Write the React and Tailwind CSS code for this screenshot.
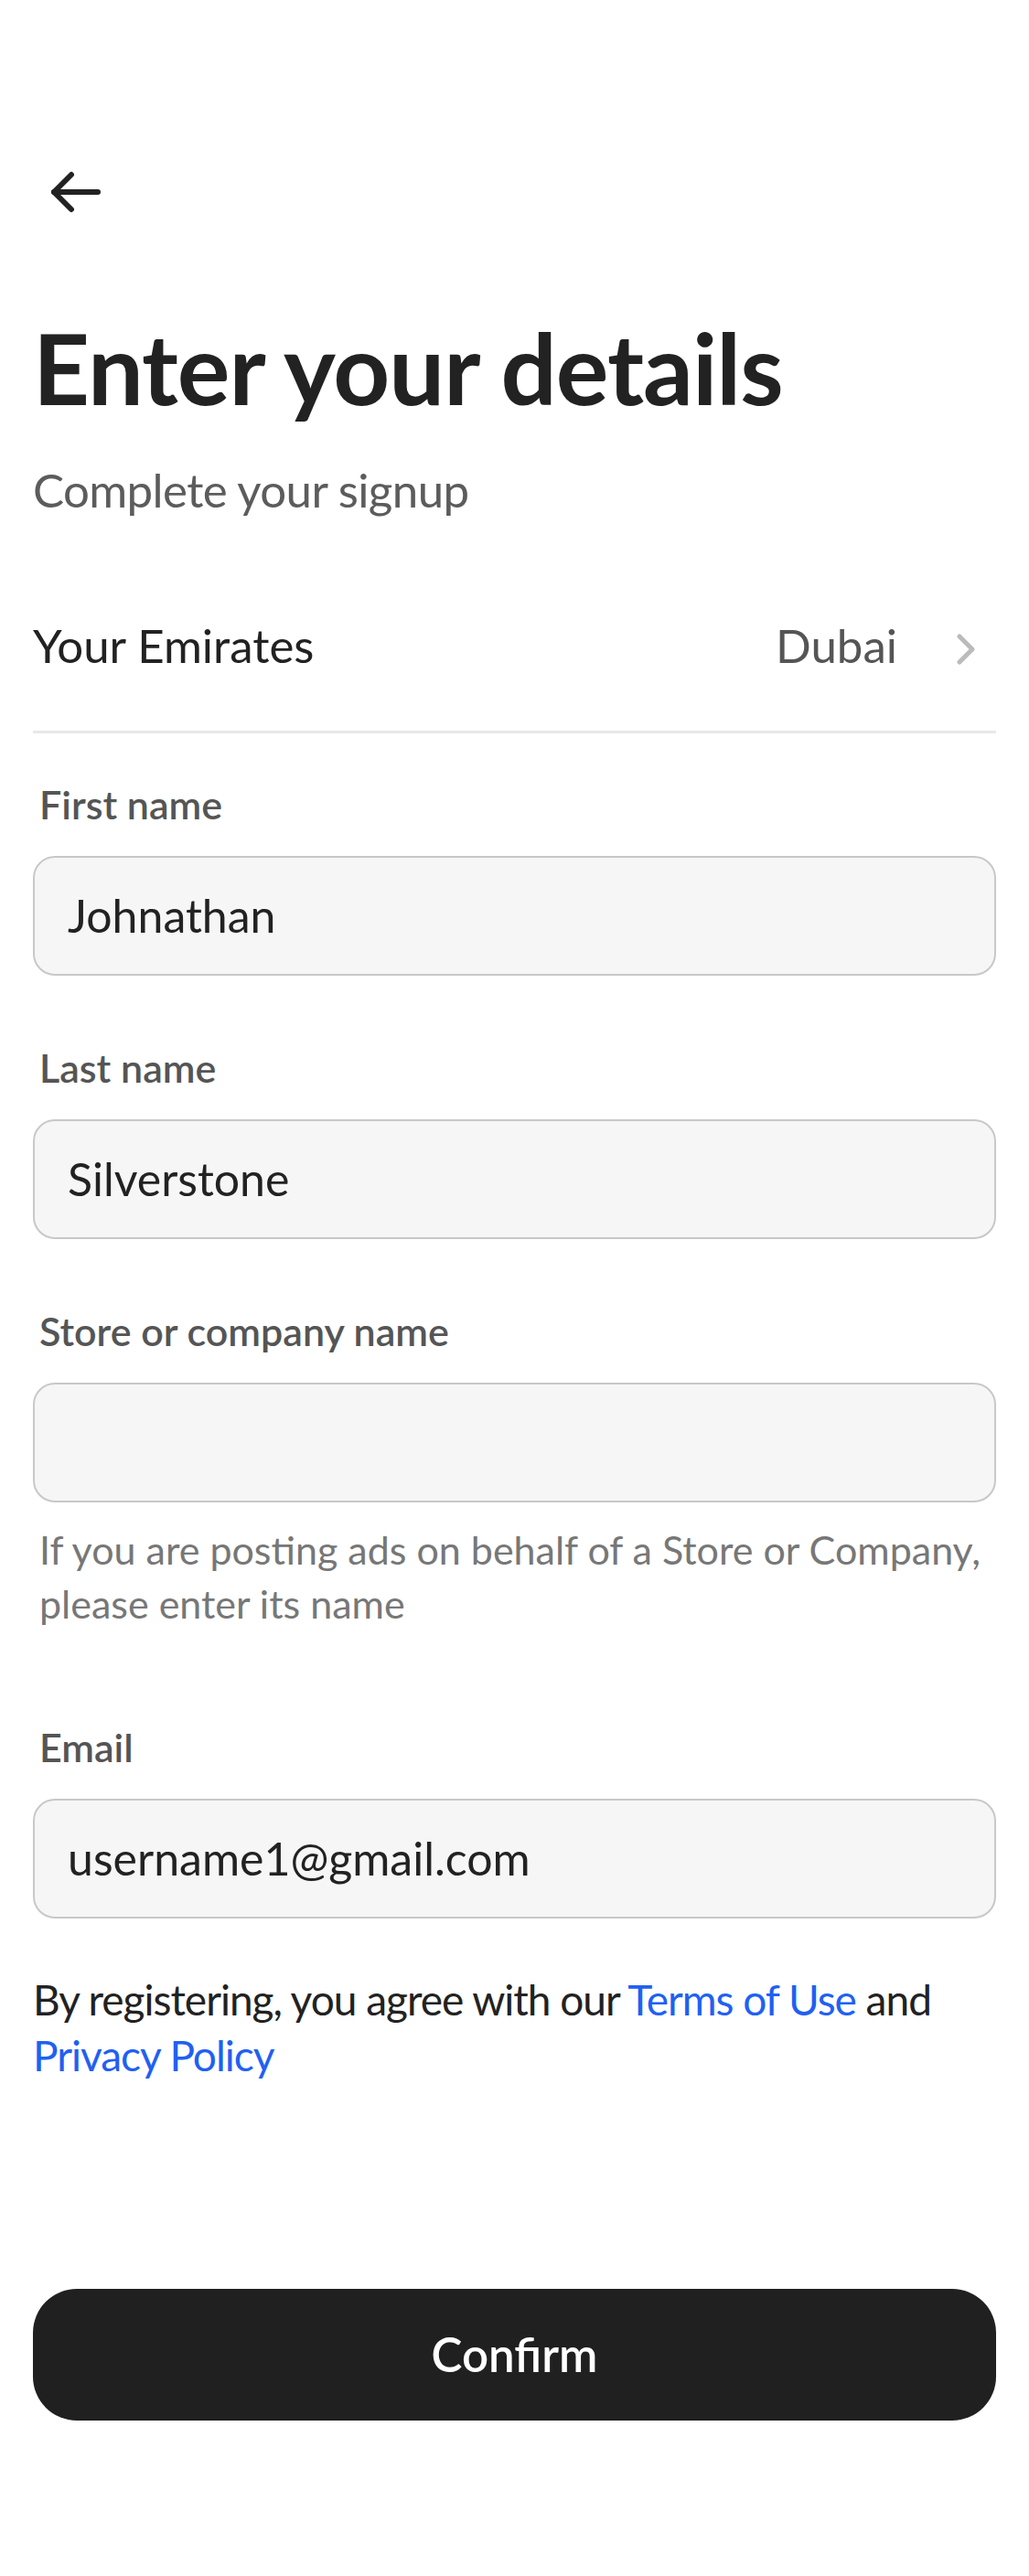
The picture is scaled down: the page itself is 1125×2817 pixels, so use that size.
import { useState } from "react";

function BackArrow() {
    return (
        <svg width="56" height="46" viewBox="0 0 56 46" fill="none" stroke="#222222" strokeWidth="6" strokeLinecap="round" strokeLinejoin="round">
            <path d="M23 4 L4 23 L23 42" />
            <path d="M4 23 H52" />
        </svg>
    )
}

function Chevron() {
    return (
        <svg width="22" height="34" viewBox="0 0 22 34" fill="none" stroke="#bbbbbb" strokeWidth="5" strokeLinecap="round" strokeLinejoin="round">
            <path d="M4 3 L18 17 L4 31" />
        </svg>
    )
}

function Field({ label, value, hint }) {
    return (
        <div className="flex flex-col">
            <label className="px-[7px] text-[43px] leading-[54px] font-semibold text-[#555555]">{label}</label>
            <div className="mt-[29px] h-[131px] flex items-center rounded-[24px] border-2 border-[#c8c8c8] bg-[#f6f6f6] px-[36px]">
                <span className="text-[50px] text-[#222222]">{value}</span>
            </div>
            {hint && (
                <p className="mt-[22px] px-[7px] text-[43px] leading-[59px] text-[#777777]">{hint}</p>
            )}
        </div>
    )
}

export default function App() {
    const [emirate] = useState("Dubai");

    return (
        <div className="min-h-[2817px] bg-white px-[36px] pt-[187px] font-['Lato',sans-serif]">
            <button className="block ml-[19px]">
                <BackArrow />
            </button>

            <h1 className="mt-[102px] text-[108px] leading-[132px] font-bold text-[#222222] tracking-[-1px]">Enter your details</h1>
            <p className="mt-[35px] text-[51px] leading-[67px] text-[#5c5c5c] tracking-[-0.6px]">Complete your signup</p>

            <div className="mt-[82px] flex items-center justify-between h-[110px]">
                <span className="text-[51px] text-[#222222]">Your Emirates</span>
                <div className="flex items-center gap-[64px] pr-[22px]">
                    <span className="text-[51px] text-[#555555]">{emirate}</span>
                    <span className="mt-[8px]">
                        <Chevron />
                    </span>
                </div>
            </div>
            <div className="mt-[38px] h-[3px] bg-[#e8e8e8]"></div>

            <div className="mt-[51px] flex flex-col gap-[74px]">
                <Field label="First name" value="Johnathan" />
                <Field label="Last name" value="Silverstone" />
                <Field
                    label="Store or company name"
                    value=""
                    hint="If you are posting ads on behalf of a Store or Company, please enter its name"
                />
            </div>

            <div className="mt-[101px]">
                <Field label="Email" value="username1@gmail.com" />
            </div>

            <p className="mt-[58px] text-[46px] leading-[61px] text-[#222222] tracking-[-1px]">
                By registering, you agree with our <a className="text-[#2160f2]">Terms of Use</a> and <a className="text-[#2160f2]">Privacy Policy</a>
            </p>

            <button className="mt-[225px] w-full h-[144px] rounded-[48px] bg-[#202020] text-white text-[51px] font-semibold">
                Confirm
            </button>
        </div>
    )
}
